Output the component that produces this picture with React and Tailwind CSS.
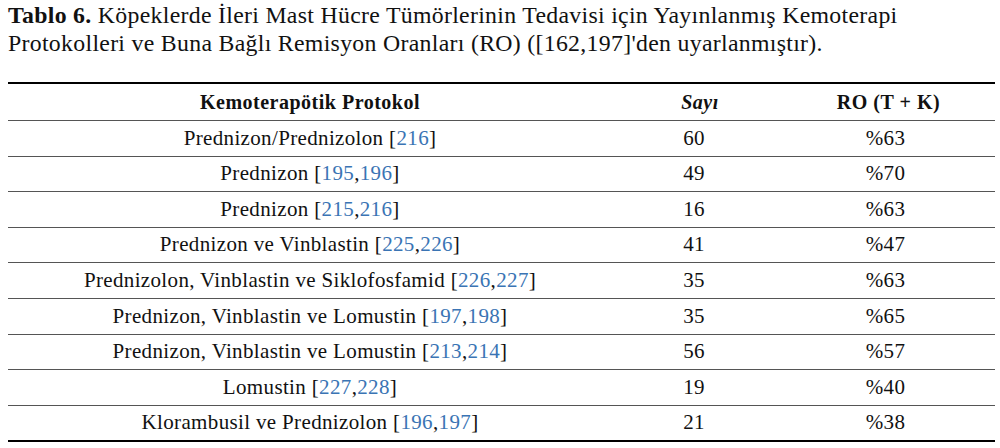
import React from "react";

const rows = [
  ["Prednizon/Prednizolon", ["216"], "60", "%63"],
  ["Prednizon", ["195", "196"], "49", "%70"],
  ["Prednizon", ["215", "216"], "16", "%63"],
  ["Prednizon ve Vinblastin", ["225", "226"], "41", "%47"],
  ["Prednizolon, Vinblastin ve Siklofosfamid", ["226", "227"], "35", "%63"],
  ["Prednizon, Vinblastin ve Lomustin", ["197", "198"], "35", "%65"],
  ["Prednizon, Vinblastin ve Lomustin", ["213", "214"], "56", "%57"],
  ["Lomustin", ["227", "228"], "19", "%40"],
  ["Klorambusil ve Prednizolon", ["196", "197"], "21", "%38"],
];

function Refs({ refs }) {
  return (
    <>
      {" ["}
      {refs.map((r, i) => (
        <React.Fragment key={r}>
          {i > 0 && ","}
          <span className="text-[#3a74b4]">{r}</span>
        </React.Fragment>
      ))}
      {"]"}
    </>
  );
}

export default function App() {
  return (
    <div className="w-[1000px] h-[448px] bg-white px-2 text-[#111] font-['Liberation_Serif',serif] overflow-hidden">
      <p className="text-[23.8px] tracking-[0.3px] leading-[28px] pt-[1px] whitespace-nowrap">
        <span className="font-bold">Tablo 6.</span> Köpeklerde İleri Mast Hücre Tümörlerinin Tedavisi için Yayınlanmış Kemoterapi
        <br />
        Protokolleri ve Buna Bağlı Remisyon Oranları (RO) ([162,197]'den uyarlanmıştır).
      </p>
      <div className="w-[987px] mt-[25px] border-t-2 border-b-2 border-black">
        <div className="flex h-[36px] items-center font-bold text-[20px] tracking-[0.5px]">
          <div className="w-[604px] text-center">Kemoterapötik Protokol</div>
          <div className="w-[170px] text-center italic pl-[6px]">Sayı</div>
          <div className="flex-1 text-center">RO (T + K)</div>
        </div>
        {rows.map((row, i) => (
          <div
            key={i}
            className="flex h-[35.6px] items-center border-t border-[#555] text-[21px] tracking-[0.35px]"
          >
            <div className="w-[604px] text-center whitespace-nowrap">
              {row[0]}
              <Refs refs={row[1]} />
            </div>
            <div className="w-[170px] text-center pr-[6px]">{row[2]}</div>
            <div className="flex-1 text-center pr-[6px]">{row[3]}</div>
          </div>
        ))}
      </div>
    </div>
  );
}
